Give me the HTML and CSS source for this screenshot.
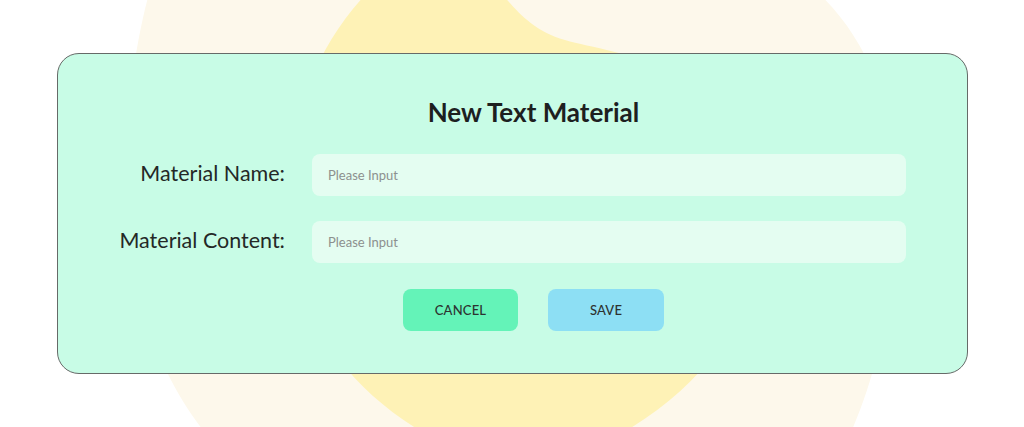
FILE: index.html
```html
<!DOCTYPE html>
<html lang="en">
<head>
<meta charset="utf-8">
<title>New Text Material</title>
<link rel="stylesheet" href="styles.css">
</head>
<body>
<div class="page">
  <svg class="decor" width="1024" height="427" viewBox="0 0 1024 427" aria-hidden="true">
    <path class="cream" d="M150 -10 C130 60 112 200 140 300 C158 365 185 410 215 445 L845 445 C872 390 897 300 897 200 C897 100 860 30 815 -10 Z"/>
    <path class="yellow" d="M498 -10 C515 8 530 30 565 40 C615 55 740 60 760 200 C770 300 710 390 600 445 L445 445 C360 400 290 330 290 200 C285 120 320 40 370 -10 Z"/>
  </svg>
  <form class="card">
    <h1 class="title">New Text Material</h1>
    <div class="row">
      <label class="label" for="name">Material Name:</label>
      <input class="field" id="name" type="text" placeholder="Please Input">
    </div>
    <div class="row">
      <label class="label" for="content">Material Content:</label>
      <input class="field" id="content" type="text" placeholder="Please Input">
    </div>
    <div class="actions">
      <button type="button" class="btn btn-cancel">CANCEL</button>
      <button type="button" class="btn btn-save">SAVE</button>
    </div>
  </form>
</div>
</body>
</html>
```

FILE: styles.css
```css
* { box-sizing: border-box; }
html, body { margin: 0; padding: 0; background: #ffffff; }
body {
  font-family: "Lato", "Inter", "Liberation Sans", sans-serif;
  color: #1f2321;
  width: 1024px;
  height: 427px;
  overflow: hidden;
}
.page {
  position: relative;
  width: 1024px;
  height: 427px;
  padding: 53px 56px 0 57px;
}
.decor {
  position: absolute;
  left: 0;
  top: 0;
  z-index: 0;
}
.cream { fill: #fdf8eb; }
.yellow { fill: #fef2b6; }
.card {
  position: relative;
  z-index: 1;
  margin: 0;
  width: 911px;
  height: 321px;
  background: #c8fce6;
  border: 1px solid #666a68;
  border-radius: 22px;
  padding: 42px 61px 0 41px;
  display: flex;
  flex-direction: column;
}
.title {
  margin: 0 0 26px 0;
  padding-left: 62px;
  text-align: center;
  font-size: 26px;
  line-height: 32px;
  font-weight: 700;
  color: #1d201f;
}
.row {
  display: flex;
  align-items: center;
  gap: 27px;
  margin-bottom: 25px;
}
.label {
  width: 186px;
  text-align: right;
  font-size: 21.5px;
  color: #242826;
  line-height: 38px;
  padding-bottom: 4px;
}
.field {
  flex: 1;
  height: 42px;
  border: none;
  outline: none;
  border-radius: 8px;
  background: #e4fdf1;
  padding: 0 16px;
  font-family: inherit;
  font-size: 13px;
  color: #333;
}
.field::placeholder { color: #8c908e; }
.actions {
  display: flex;
  justify-content: center;
  gap: 30px;
  padding-left: 62px;
  margin-top: 1px;
}
.btn {
  height: 42px;
  border: none;
  border-radius: 8px;
  font-family: inherit;
  font-size: 13px;
  font-weight: 500;
  letter-spacing: 0.2px;
  color: #2d3230;
  cursor: pointer;
}
.btn-cancel { width: 115px; background: #64f3b8; }
.btn-save { width: 116px; background: #8ddff4; }
```
